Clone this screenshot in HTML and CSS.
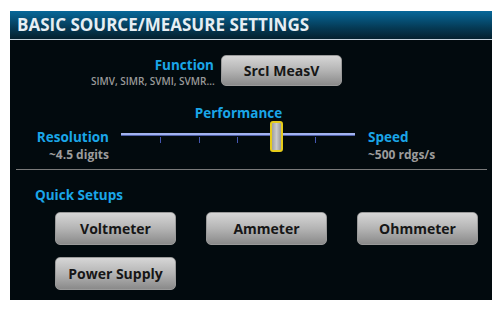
FILE: index.html
```html
<!DOCTYPE html>
<html>
<head>
<meta charset="utf-8">
<link rel="stylesheet" href="styles.css">
</head>
<body>
<div class="panel">
  <div class="header">BASIC SOURCE/MEASURE SETTINGS</div>
  <div class="content">
    <div class="func-row">
      <div class="func-label">
        <div class="blue func-title">Function</div>
        <div class="func-sub">SIMV, SIMR, SVMI, SVMR...</div>
      </div>
      <div class="btn func-btn">SrcI MeasV</div>
    </div>
    <div class="perf">
      <div class="perf-title blue">Performance</div>
      <div class="side left">
        <div class="blue side-title">Resolution</div>
        <div class="side-sub">~4.5 digits</div>
      </div>
      <div class="slider">
        <div class="track"></div>
        <div class="ticks">
          <span class="tick hidden"></span>
          <span class="tick"></span>
          <span class="tick"></span>
          <span class="tick"></span>
          <span class="tick"></span>
          <span class="tick"></span>
          <span class="tick hidden"></span>
        </div>
        <div class="thumb" style="left: 149px"></div>
      </div>
      <div class="side right">
        <div class="blue side-title">Speed</div>
        <div class="side-sub">~500 rdgs/s</div>
      </div>
    </div>
    <div class="sep"></div>
    <div class="qs-title blue">Quick Setups</div>
    <div class="qs-grid">
      <div class="btn">Voltmeter</div>
      <div class="btn">Ammeter</div>
      <div class="btn">Ohmmeter</div>
      <div class="btn">Power Supply</div>
    </div>
  </div>
</div>
</body>
</html>
```
FILE: styles.css
```css
html, body {
  margin: 0;
  padding: 0;
  background: #ffffff;
}
body {
  font-family: "Open Sans", "DejaVu Sans", sans-serif;
  font-weight: 700;
}
.panel {
  margin: 11px 0 0 10px;
  width: 482px;
  height: 289px;
  background: #020a0e;
  display: flex;
  flex-direction: column;
}
.header {
  height: 29px;
  box-sizing: border-box;
  border-bottom: 1px solid #c4d2dc;
  background: linear-gradient(#07689a, #053a55 60%, #04202e);
  color: #e6eef3;
  font-size: 17px;
  line-height: 27px;
  padding-left: 7px;
  letter-spacing: 0;
}
.blue { color: #1aa6e8; }
.content {
  display: flex;
  flex-direction: column;
  padding-top: 15px;
}
.func-row {
  display: flex;
  align-items: flex-start;
  padding-left: 81px;
  gap: 7px;
}
.func-label {
  width: 123px;
  text-align: right;
  padding-top: 1px;
}
.func-title {
  font-size: 13.5px;
  line-height: 18px;
}
.func-sub {
  font-size: 10px;
  line-height: 14px;
  font-weight: 600;
  color: #9a9a9a;
  white-space: nowrap;
}
.btn {
  width: 121px;
  height: 33px;
  box-sizing: border-box;
  border-radius: 5px;
  border: 1px solid #9a9a9a;
  background: linear-gradient(#d6d6d6, #b4b4b4 50%, #8a8a8a);
  color: #161616;
  font-size: 14px;
  display: flex;
  align-items: center;
  justify-content: center;
  white-space: nowrap;
}
.func-btn { height: 31px; }
.perf {
  display: grid;
  grid-template-columns: 100px 233px 1fr;
  column-gap: 12px;
  margin-top: 16px;
}
.perf-title {
  grid-column: 2;
  grid-row: 1;
  text-align: center;
  font-size: 13.5px;
  line-height: 18px;
  margin-bottom: 4px;
}
.side { padding-top: 3px; grid-row: 2; }
.side.left { grid-column: 1; text-align: right; margin-right: 1px; }
.side.right { grid-column: 3; padding-left: 1px; }
.slider { grid-column: 2; grid-row: 2; }
.side-title {
  font-size: 13.5px;
  line-height: 17px;
}
.side-sub {
  font-size: 12px;
  line-height: 17px;
  color: #9c9c9c;
  font-weight: 700;
}
.slider {
  position: relative;
  height: 36px;
  margin-left: -1px;
}
.track {
  margin-top: 7px;
  height: 2px;
  background: #a2b2ee;
  border-bottom: 1px solid #5060a8;
}
.ticks {
  display: flex;
  justify-content: space-between;
  margin-top: 1px;
}
.tick {
  width: 1px;
  height: 6px;
  background: #4456b0;
}
.tick.hidden { background: transparent; }
.thumb {
  position: absolute;
  top: -5px;
  width: 13px;
  height: 31px;
  box-sizing: border-box;
  border: 2px solid #e6cc1a;
  border-radius: 3px;
  background: linear-gradient(90deg, #a0a0a0, #cacaca 50%, #9a9a9a);
}
.sep {
  margin: 6px 5px 0 6px;
  height: 1px;
  background: #7a7a7a;
}
.qs-title {
  font-size: 13.5px;
  line-height: 18px;
  margin-top: 16px;
  padding-left: 25px;
}
.qs-grid {
  display: grid;
  grid-template-columns: 121px 121px 121px;
  column-gap: 30px;
  row-gap: 12px;
  padding-left: 45px;
  margin-top: 8px;
}
```
